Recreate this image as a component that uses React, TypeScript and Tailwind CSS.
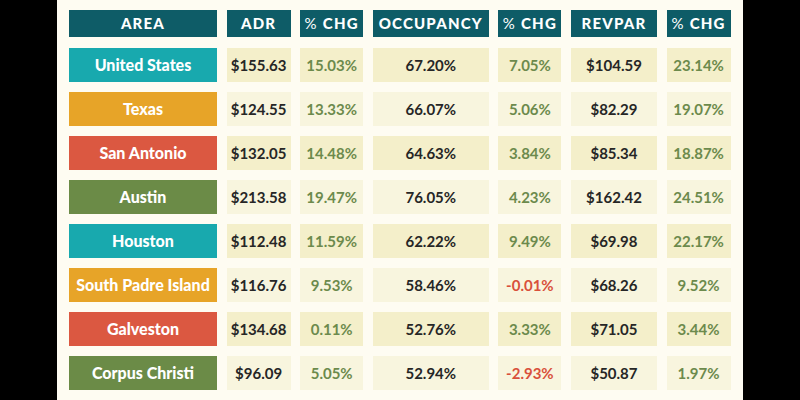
const rows = [
  { area: "United States", color: "bg-[#18a9ae]", adr: "$155.63", adrChg: "15.03%", occ: "67.20%", occChg: "7.05%", rev: "$104.59", revChg: "23.14%" },
  { area: "Texas", color: "bg-[#e7a428]", adr: "$124.55", adrChg: "13.33%", occ: "66.07%", occChg: "5.06%", rev: "$82.29", revChg: "19.07%" },
  { area: "San Antonio", color: "bg-[#db5841]", adr: "$132.05", adrChg: "14.48%", occ: "64.63%", occChg: "3.84%", rev: "$85.34", revChg: "18.87%" },
  { area: "Austin", color: "bg-[#6b8b47]", adr: "$213.58", adrChg: "19.47%", occ: "76.05%", occChg: "4.23%", rev: "$162.42", revChg: "24.51%" },
  { area: "Houston", color: "bg-[#18a9ae]", adr: "$112.48", adrChg: "11.59%", occ: "62.22%", occChg: "9.49%", rev: "$69.98", revChg: "22.17%" },
  { area: "South Padre Island", color: "bg-[#e7a428]", adr: "$116.76", adrChg: "9.53%", occ: "58.46%", occChg: "-0.01%", rev: "$68.26", revChg: "9.52%" },
  { area: "Galveston", color: "bg-[#db5841]", adr: "$134.68", adrChg: "0.11%", occ: "52.76%", occChg: "3.33%", rev: "$71.05", revChg: "3.44%" },
  { area: "Corpus Christi", color: "bg-[#6b8b47]", adr: "$96.09", adrChg: "5.05%", occ: "52.94%", occChg: "-2.93%", rev: "$50.87", revChg: "1.97%" },
];

function Head({ children }: { children: React.ReactNode }) {
  return (
    <div className="h-[27px] mb-[1px] bg-[#0e5c67] flex items-center justify-center text-white text-[15px] font-black tracking-[0.08em]">
      {children}
    </div>
  );
}

function Chg() {
  return (
    <Head>
      <span className="font-normal mr-[5px]">%</span>CHG
    </Head>
  );
}

function Cell({ value, kind, dark }: { value: string; kind: "num" | "pct"; dark: boolean }) {
  const neg = value.startsWith("-");
  const text =
    kind === "num"
      ? "text-[#262626] font-bold"
      : neg
      ? "text-[#d9503b] font-bold"
      : "text-[#6c8a4c] font-bold";
  return (
    <div
      className={`h-[34px] flex items-center justify-center text-[15px] ${text} ${
        dark ? "bg-[#f4efca]" : "bg-[#f8f5de]"
      }`}
    >
      {value}
    </div>
  );
}

export default function App() {
  return (
    <div className="w-[800px] h-[400px] bg-black flex justify-center">
      <div className="w-[686px] h-full bg-[#fefcf2] pt-[10px] px-[12px] font-['Lato',sans-serif]">
        <div className="grid grid-cols-[148px_64px_63px_116px_63px_86px_64px] gap-x-[9.6px] gap-y-[10px]">
          <Head>AREA</Head>
          <Head>ADR</Head>
          <Chg />
          <Head>OCCUPANCY</Head>
          <Chg />
          <Head>REVPAR</Head>
          <Chg />
          {rows.map((r, i) => {
            const dark = i % 2 === 0;
            return (
              <div key={r.area} className="contents">
                <div
                  className={`h-[34px] ${r.color} flex items-center justify-center text-white text-[16px] font-black`}
                >
                  {r.area}
                </div>
                <Cell value={r.adr} kind="num" dark={dark} />
                <Cell value={r.adrChg} kind="pct" dark={dark} />
                <Cell value={r.occ} kind="num" dark={dark} />
                <Cell value={r.occChg} kind="pct" dark={dark} />
                <Cell value={r.rev} kind="num" dark={dark} />
                <Cell value={r.revChg} kind="pct" dark={dark} />
              </div>
            );
          })}
        </div>
      </div>
    </div>
  );
}
